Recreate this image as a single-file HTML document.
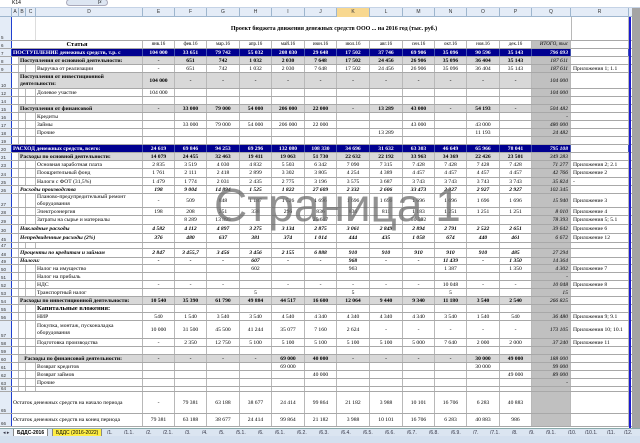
<!DOCTYPE html>
<html><head><meta charset="utf-8">
<style>
*{margin:0;padding:0;box-sizing:border-box}
body{width:640px;height:443px;overflow:hidden;background:#fff;position:relative;font-family:"Liberation Serif",serif;font-size:5.6px;color:#000}
.fb{position:absolute;left:0;top:0;width:640px;height:8px;background:#fff;border-bottom:1px solid #c5d3e6}
.hdr{position:absolute;top:8px;left:0;height:9px;width:632px;background:#e4ecf7;border-bottom:1px solid #9eb6ce}
.hdr span{position:absolute;top:0;height:9px;line-height:9px;text-align:center;font-family:"Liberation Sans",sans-serif;font-size:5px;color:#333;border-right:1px solid #9eb6ce}
.row{position:absolute;left:0;width:632px;border-bottom:1px solid #a8a8a8}
.row span{position:absolute;top:0;bottom:0;border-right:1px solid #b8b8b8;white-space:nowrap;overflow:visible;display:flex;align-items:center;justify-content:center}
.rn{background:#e4ecf7;color:#333;font-family:"Liberation Sans",sans-serif;font-size:4.5px;justify-content:flex-start!important;align-items:flex-end!important;padding-left:1px;border-right:1px solid #2040d0!important}
.lbl{justify-content:flex-start!important;padding-left:1px;z-index:2}
.wrap{white-space:normal!important;line-height:1.2}
.q{background:#c0c0c0;font-style:italic;justify-content:flex-end!important;padding-right:2px}
.r{justify-content:flex-start!important;padding-left:2px}
.blue span{background:#000090;color:#fff;font-weight:bold;border-right-color:#4050b0}
.blue .rn{background:#e4ecf7;color:#333;font-weight:normal}
.blue .r{background:#fff}
.gray span{background:#d8d8d8;font-weight:bold}
.gray .rn{background:#e4ecf7;font-weight:normal}
.gray .q{background:#c0c0c0;font-weight:normal}
.gray .r{background:#fff;font-weight:normal}
.gray .c{font-weight:normal}
.bi span{font-weight:bold;font-style:italic}
.bi .rn,.bi .r{font-weight:normal;font-style:normal}
.bi .q{font-weight:normal}
.side{position:absolute;left:632px;top:8px;width:8px;height:426px;background:#a4a4a4}
.vline{position:absolute;left:629px;top:17px;width:2px;height:411px;background:#1a1ad0;z-index:5}
.wm{position:absolute;left:214px;top:178px;font-family:"Liberation Sans",sans-serif;font-size:46px;color:rgba(110,110,110,0.75);z-index:10;white-space:nowrap}
.tabs{position:absolute;left:0;top:428px;width:640px;height:8px;background:#dbe5f1;border-top:1px solid #8aa;font-family:"Liberation Sans",sans-serif;font-size:5px}
.tabs span{position:absolute;top:0;height:8px;line-height:8px;padding:0 3px;color:#334}
.status{position:absolute;left:0;top:436px;width:640px;height:7px;background:#d4e0ef}
</style></head><body>
<div class="fb"><span style="position:absolute;left:12px;top:0;font-family:'Liberation Sans';font-size:5px;line-height:7px">K14</span><span style="position:absolute;left:66px;top:-1px;width:42px;height:7px;border-radius:4px;background:#dde6f2;border:1px solid #aab"></span><span style="position:absolute;left:98px;top:0;font-size:5px;font-style:italic">fx</span></div>
<div class="hdr" id="hdr"></div>
<div id="grid"></div>
<div class="side"></div>
<div class="vline"></div>
<div class="wm">Страница 1</div>
<div class="tabs" id="tabs"></div>
<div class="status"></div>
<script>
var cols=[["",0,12],["A",12,7],["B",19,7],["C",26,10],["D",36,107],["E",143,32],["F",175,32],["G",207,33],["H",240,32],["I",272,33],["J",305,32],["K",337,33],["L",370,33],["M",403,32],["N",435,32],["O",467,33],["P",500,32],["Q",532,39],["R",571,58]];
var h=document.getElementById('hdr'),s='';
cols.forEach(function(c){s+='<span style="left:'+c[1]+'px;width:'+c[2]+'px;'+(c[0]=='K'?'background:#f8d890;':'')+'">'+c[0]+'</span>'});
h.innerHTML=s;
var months=["янв.16","фев.16","мар.16","апр.16","май.16","июн.16","июл.16","авг.16","сен.16","окт.16","ноя.16","дек.16"];
function sp(v){return v.split(',')}
var P1="-,651,742,1 032,2 030,7 648,17 502,24 456,26 906,35 096,36 404,35 143";
var R=[
[5,24,"t","","",""],
[6,8,"hd"],
[7,8,"blue","ПОСТУПЛЕНИЕ денежных средств, т.р. с",1,"104 000,33 651,79 742,55 032,208 030,29 648,17 502,37 746,69 906,35 096,90 596,35 143","796 093",""],
[8,8,"gray","Поступления от основной деятельности:",2,P1,"187 611",""],
[9,8,"n","Выручка от реализации",4,P1,"187 611","Приложения 1; 1.1"],
[10,16,"gray","Поступления от инвестиционной<br>деятельности:",2,"104 000,-,-,-,-,-,-,-,-,-,-,-","104 000",""],
[12,8,"n","Долевое участие",4,"104 000,,,,,,,,,,,","104 000",""],
[14,8,"n","",4,",,,,,,,,,,,","",""],
[15,8,"gray","Поступления от финансовой",2,"-,33 000,79 000,54 000,206 000,22 000,-,13 289,43 000,-,54 193,-","504 482",""],
[16,8,"n","Кредиты",4,",,,,,,,,,,,","-",""],
[17,8,"n","Займы",4,",33 000,79 000,54 000,206 000,22 000,,,43 000,,43 000,","480 000",""],
[18,8,"n","Прочие",4,",,,,,,,13 289,,,11 193,","24 482",""],
[19,8,"n","",4,",,,,,,,,,,,","",""],
[20,8,"blue","РАСХОД денежных средств, всего:",1,"24 619,69 846,94 253,69 296,132 080,108 330,34 696,31 632,63 303,46 649,65 966,78 041","795 108",""],
[21,8,"gray","Расходы по основной деятельности:",2,"14 079,24 455,32 463,19 411,19 063,51 730,22 632,22 192,33 963,34 369,22 426,23 501","349 283",""],
[23,8,"n","Основная заработная плата",4,"2 835,3 519,4 030,4 832,5 503,6 342,7 090,7 315,7 428,7 428,7 428,7 428","71 277","Приложения 2; 2.1"],
[24,9,"n","Поощрительный фонд",4,"1 761,2 111,2 418,2 899,3 302,3 805,4 254,4 389,4 457,4 457,4 457,4 457","42 766","Приложение 2"],
[25,8,"n","Налоги с ФОТ (31,5%)",4,"1 479,1 774,2 031,2 435,2 775,3 196,3 575,3 687,3 743,3 743,3 743,3 743","35 824","-"],
[26,8,"bi","Расходы производства",2,"198,9 004,14 894,1 525,1 822,27 609,2 332,2 606,33 473,2 927,2 927,2 927","102 345",""],
[27,14,"n","Планово-предупредительный ремонт оборудования",4,"-,509,848,1 187,1 526,1 696,1 696,1 696,1 696,1 696,1 696,1 696","15 940","Приложение 3"],
[28,8,"n","Электроэнергия",4,"198,208,251,338,296,836,836,811,1 183,1 251,1 251,1 251","8 010","Приложение 4"],
[29,9,"n","Затраты на сырье и материалы",4,",8 289,13 895,,,25 617,,,50 592,,,","78 393","Приложения 5; 5.1"],
[30,9,"bi","Накладные расходы",2,"4 582,4 112,4 897,3 275,3 134,2 875,3 061,2 849,2 894,2 791,2 522,2 651","39 642","Приложение 6"],
[45,9,"bi","Непредвиденные расходы (2%)",2,"376,480,637,381,374,1 014,444,435,1 058,674,440,461","6 672","Приложение 12"],
[47,6,"n","",4,",,,,,,,,,,,","",""],
[48,9,"bi","Проценты по кредитам и займам",2,"2 847,3 455&#44;7,3 456,3 456,2 155,6 888,910,910,910,910,910,485","27 294",""],
[49,7,"bi","Налоги:",2,"-,-,-,607,-,-,968,-,-,11 439,-,1 350","14 364",""],
[50,8,"n","Налог на имущество",4,",,,602,,,963,,,1 387,,1 350","4 302","Приложение 7"],
[51,8,"n","Налог на прибыль",4,",,,,,,,,,,,","-",""],
[52,8,"n","НДС",4,"-,-,-,,-,-,-,-,-,10 048,-,-","10 048","Приложение 8"],
[53,8,"n","Транспортный налог",4,",,,5,,,5,,,5,,","15",""],
[54,8,"gray","Расходы по инвестиционной деятельности:",2,"10 540,35 390,61 790,49 884,44 517,16 600,12 064,9 440,9 340,11 180,3 540,2 540","266 825",""],
[55,8,"b","Капитальные вложения:",4,",,,,,,,,,,,","",""],
[56,8,"n","НИР",4,"540,1 540,3 540,3 540,4 540,4 340,4 340,4 340,4 340,3 540,1 540,540","36 480","Приложения 9; 9.1"],
[57,18,"n","Покупка, монтаж, пусконаладка оборудования",4,"10 000,31 500,45 500,41 244,35 077,7 160,2 624,-,-,-,-,-","173 105","Приложения 10; 10.1"],
[58,8,"n","Подготовка производства",4,"-,2 350,12 750,5 100,5 100,5 100,5 100,5 100,5 000,7 640,2 000,2 000","37 240","Приложение 11"],
[59,8,"n","",4,",,,,,,,,,,,","",""],
[60,8,"gray","  Расходы по финансовой деятельности:",2,"-,-,-,-,69 000,40 000,-,-,-,-,30 000,49 000","188 000",""],
[61,8,"n","Возврат кредитов",4,",,,,69 000,,,,,,30 000,","99 000",""],
[62,8,"n","Возврат займов",4,",,,,,40 000,,,,,,49 000","89 000",""],
[63,8,"n","Прочие",4,",,,,,,,,,,,","-",""],
[64,5,"n","",4,",,,,,,,,,,,","",""],
[65,22,"n","Остаток денежных средств на начало периода",1,"-,79 381,63 188,38 677,24 414,99 864,21 182,3 988,10 101,16 706,6 283,40 883","",""],
[66,13,"n","Остаток денежных средств на конец периода",1,"79 381,63 188,38 677,24 414,99 864,21 182,3 988,10 101,16 706,6 283,40 883,986","",""]
];
var y=17,g='';
R.forEach(function(r){
 var cls=r[2],o='<div class="row '+cls+'" style="top:'+y+'px;height:'+r[1]+'px">';
 o+='<span class="rn" style="left:0;width:12px">'+r[0]+'</span>';
 if(cls=="t"){
  o+='<span style="left:12px;width:24px;border-right:1px solid #ddd"></span><span style="left:36px;width:536px;border:none;font-weight:bold;font-size:6px;justify-content:center;padding-left:60px">Проект бюджета движения денежных средств ООО ... на 2016 год (тыс. руб.)</span><span style="left:571px;width:58px;border-left:1px solid #b8b8b8"></span>';
 } else if(cls=="hd"){
  o+='<span style="left:12px;width:131px;font-weight:bold;font-size:6.5px">Статья</span>';
  for(var i=0;i<12;i++){var c=cols[5+i];o+='<span style="left:'+c[1]+'px;width:'+c[2]+'px;font-size:5px">'+months[i]+'</span>';}
  o+='<span class="q" style="left:532px;width:39px;font-size:5px">ИТОГО, тыс</span><span class="r" style="left:571px;width:58px"></span>';
 } else {
  var ind=r[4],lx=cols[ind][1];
  for(var k=1;k<ind;k++){o+='<span class="c" style="left:'+cols[k][1]+'px;width:'+cols[k][2]+'px;background:#fff"></span>';}
  var extra=(cls=="b")?'font-weight:bold;font-size:6.5px;':'';
  var wc=(r[1]>=14&&r[0]<60)?' wrap':'';
  o+='<span class="lbl'+wc+'" style="left:'+lx+'px;width:'+(143-lx)+'px;'+extra+'">'+r[3].replace(/^ +/,'&nbsp;&nbsp;&nbsp;')+'</span>';
  var v=sp(r[5]);
  for(var i=0;i<12;i++){var c=cols[5+i];o+='<span style="left:'+c[1]+'px;width:'+c[2]+'px">'+(v[i]||'')+'</span>';}
  o+='<span class="q" style="left:532px;width:39px">'+r[6]+'</span><span class="r" style="left:571px;width:58px">'+r[7]+'</span>';
 }
 o+='</div>';g+=o;y+=r[1];
});
document.getElementById('grid').innerHTML=g;
var tabs=["1.","1.1.","2.","2.1.","3.","4.","5.","5.1.","6.","6.1.","6.2.","6.3.","6.4.","6.5.","6.6.","6.7.","6.8.","6.9.","7.","7.1.","8.","9.","9.1.","10.","10.1.","11.","12."];
var t='<span style="left:0">◂ ▸</span><span style="left:13px;background:#fff;font-weight:bold;color:#000;border:1px solid #888;border-top:none">БДДС-2016</span><span style="left:52px;background:#ffee44;color:#000;border:1px solid #888;border-top:none">БДДС (2016-2022)</span>';
var x=104;tabs.forEach(function(n){t+='<span style="left:'+x+'px">/'+n+'</span>';x+=(n.length>3?22:17);});
document.getElementById('tabs').innerHTML=t;
</script>
</body></html>
